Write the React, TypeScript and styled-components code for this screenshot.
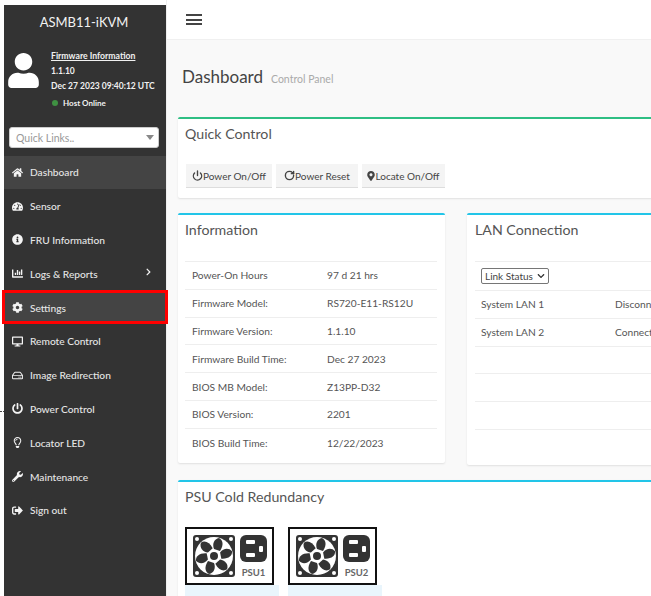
import React from 'react';
import styled, { createGlobalStyle } from 'styled-components';
import {
  FaChartBar,
  FaChevronRight,
  FaCog,
  FaDesktop,
  FaHome,
  FaInfoCircle,
  FaMapMarkerAlt,
  FaPowerOff,
  FaRegHdd,
  FaRegLightbulb,
  FaSignOutAlt,
  FaTachometerAlt,
  FaUser,
  FaWrench,
} from 'react-icons/fa';
import { LuPower, LuRotateCw } from 'react-icons/lu';

const GlobalStyle = createGlobalStyle`
  html, body {
    margin: 0;
    padding: 0;
    background: #fff;
    overflow: hidden;
  }
  body {
    font-family: Lato, "Noto Sans", sans-serif;
  }
`;

const Page = styled.div`
  position: relative;
  width: 651px;
  height: 596px;
  display: flex;
  overflow: hidden;
  padding-left: 4px;
  box-sizing: border-box;
`;

const Dots = styled.div`
  position: absolute;
  left: 0;
  top: 411px;
  width: 4px;
  border-top: 1px dotted #444;
`;

const Sidebar = styled.aside`
  flex: 0 0 162px;
  margin-top: 5px;
  background: #333;
  color: #eee;
  display: flex;
  flex-direction: column;
`;

const Brand = styled.div`
  height: 36px;
  line-height: 34px;
  text-align: center;
  font-size: 13px;
  color: #f2f2f2;
  margin-left: -2px;
`;

const UserPanel = styled.div`
  height: 67px;
  padding-top: 9px;
  display: flex;
  gap: 12px;
  padding-left: 4px;
`;

const Avatar = styled(FaUser)`
  width: 31px;
  height: 35px;
  margin-top: 3px;
  color: #fff;
`;

const UserInfo = styled.div`
  font-size: 8.5px;
  font-weight: 700;
  display: flex;
  flex-direction: column;
  gap: 4px;
  line-height: 11.5px;
  color: #f0f0f0;
`;

const FirmwareLink = styled.span`
  text-decoration: underline;
  font-size: 8.7px;
`;

const HostStatus = styled.span`
  display: flex;
  align-items: center;
  gap: 5px;
  font-size: 8px;
  margin-top: 1px;
  padding-left: 1px;
`;

const StatusDot = styled.i`
  width: 6px;
  height: 6px;
  border-radius: 50%;
  background: #3f9142;
`;

const QuickLinks = styled.div`
  margin: 10px 7px 0 5px;
  height: 21px;
  background: #fff;
  border-radius: 3px;
  border: 1px solid #ccc;
  box-sizing: border-box;
  display: flex;
  align-items: center;
  justify-content: space-between;
  padding: 0 4px 0 6px;
  font-size: 10.5px;
  color: #999;
`;

const Caret = styled.i`
  border-left: 4px solid transparent;
  border-right: 4px solid transparent;
  border-top: 5px solid #888;
`;

const NavList = styled.nav`
  margin-top: 7.5px;
  display: flex;
  flex-direction: column;
`;

const NavItem = styled.div<{ $active?: boolean; $marked?: boolean }>`
  position: relative;
  height: 33.8px;
  display: flex;
  align-items: center;
  padding-left: 8px;
  gap: 7px;
  font-size: 10.2px;
  font-weight: 500;
  color: #e6e6e6;
  background: ${(props) => (props.$active ? '#444' : 'transparent')};

  svg {
    flex: 0 0 11px;
    width: 11px;
    height: 11px;
    color: #f4f4f4;
  }

  ${(props) =>
    props.$marked &&
    `
    &::after {
      content: '';
      position: absolute;
      top: -1px;
      bottom: 0;
      left: -2px;
      right: -2px;
      border: 3px solid #f00;
    }
  `}
`;

const NavArrow = styled(FaChevronRight)`
  position: absolute;
  right: 14px;
  top: 11px;
  && {
    width: 7px;
    height: 8px;
  }
`;

const Main = styled.main`
  flex: 1;
  min-width: 0;
  display: flex;
  flex-direction: column;
  background: #f9f9f9;
  border-left: 1px solid #eee;
  overflow: hidden;
`;

const TopBar = styled.header`
  flex: 0 0 39px;
  background: #fff;
  border-bottom: 1px solid #f0f0f0;
  display: flex;
  align-items: center;
  padding-left: 19px;
`;

const Burger = styled.div`
  width: 16px;
  height: 11px;
  border-top: 2px solid #444;
  border-bottom: 2px solid #444;
  position: relative;
  box-sizing: border-box;

  &::after {
    content: '';
    position: absolute;
    left: 0;
    right: 0;
    top: 2.5px;
    height: 2px;
    background: #444;
  }
`;

const Content = styled.div`
  width: 640px;
  padding: 25px 0 0 11px;
  box-sizing: border-box;
`;

const TitleRow = styled.div`
  display: flex;
  align-items: baseline;
  gap: 8px;
  height: 52px;
  padding-left: 4px;
`;

const PageTitle = styled.h1`
  margin: 0;
  font-size: 17px;
  line-height: 24px;
  font-weight: 400;
  color: #444;
`;

const PageSubtitle = styled.small`
  font-size: 10.5px;
  color: #aaa;
`;

const Card = styled.section<{ $accent: string; $height: number }>`
  background: #fff;
  border-top: 2px solid ${(props) => props.$accent};
  border-radius: 2px;
  box-shadow: 0 1px 2px rgba(0, 0, 0, 0.1);
  height: ${(props) => props.$height}px;
  box-sizing: border-box;
  padding: 0 8px 0 7px;
`;

const CardTitle = styled.h2`
  margin: 0;
  font-size: 14.2px;
  font-weight: 400;
  line-height: 30px;
  color: #555;
`;

const ButtonRow = styled.div`
  margin-top: 15px;
  display: flex;
  gap: 4px;
  padding-left: 1px;
`;

const ActionButton = styled.button<{ $width: number }>`
  width: ${(props) => props.$width}px;
  height: 24px;
  padding: 0;
  display: flex;
  align-items: center;
  justify-content: center;
  border: 0;
  border-bottom: 1px solid #ddd;
  background: #f4f4f4;
  color: #444;
  font: 400 10px Lato, "Noto Sans", sans-serif;

  svg {
    width: 11px;
    height: 11px;
    stroke-width: 3;
  }
`;

const MarkerIcon = styled(FaMapMarkerAlt)`
  && {
    width: 8px;
    height: 10px;
  }
`;

const Columns = styled.div`
  margin-top: 15px;
  display: grid;
  grid-template-columns: 267px 267px;
  gap: 22px;
`;

const Table = styled.div`
  margin-top: 16px;
  border-top: 1px solid #eee;
`;

const Row = styled.div`
  height: 27.8px;
  box-sizing: border-box;
  border-bottom: 1px solid #eee;
  display: grid;
  grid-template-columns: 135px 1fr;
  align-items: center;
  padding-left: 7px;
  font-size: 10.2px;
  color: #555;
  white-space: nowrap;

  &:last-child {
    border-bottom: 0;
  }
`;

const LanRow = styled(Row)`
  grid-template-columns: 134px 1fr;
  padding-left: 6px;

  &:last-child {
    border-bottom: 1px solid #eee;
  }
`;

const LinkSelect = styled.div`
  width: 68px;
  height: 16px;
  box-sizing: border-box;
  border: 1px solid #767676;
  border-radius: 2px;
  display: flex;
  align-items: center;
  justify-content: space-between;
  padding: 0 3px;
  font-size: 10px;
  color: #444;
`;

const SelectChevron = styled(FaChevronRight)`
  width: 8px;
  height: 8px;
  color: #333;
  transform: rotate(90deg);
`;

const SelectRow = styled.div`
  height: 29px;
  box-sizing: border-box;
  border-bottom: 1px solid #eee;
  display: flex;
  align-items: center;
  padding-left: 6px;
`;

const LanCard = styled(Card)`
  padding-left: 8px;
`;

const PsuCard = styled(Card)`
  margin-top: 15px;
`;

const PsuRow = styled.div`
  margin-top: 15px;
  display: flex;
  gap: 9px;
`;

const PsuColumn = styled.div`
  width: 94px;
`;

const PsuStatus = styled.div`
  height: 12px;
  background: #e9f5fc;
`;

const PsuImage = styled.svg`
  display: block;
  width: 89px;
  height: 58px;
`;

const FAN_BLADES = [0, 60, 120, 180, 240, 300];

const PsuIcon = ({ label }: { label: string }) => (
  <PsuImage viewBox="0 0 89 58">
    <rect x="1" y="1" width="87" height="56" fill="#fff" stroke="#111" strokeWidth="2" />
    <rect x="8" y="8" width="42" height="42" rx="3" fill="#333" />
    <circle cx="29" cy="29" r="19" fill="#fff" />
    {[
      [12, 12],
      [46, 12],
      [12, 46],
      [46, 46],
    ].map(([cx, cy]) => (
      <circle key={`${cx}-${cy}`} cx={cx} cy={cy} r="2" fill="#fff" />
    ))}
    {FAN_BLADES.map((angle) => (
      <path
        key={angle}
        d="M29 22 C27 17 29 12 34 11 C38 13 39 18 35 24 Z"
        fill="#333"
        transform={`rotate(${angle} 29 29)`}
      />
    ))}
    <circle cx="29" cy="29" r="6" fill="#fff" />
    <circle cx="29" cy="29" r="4" fill="#333" />
    <rect x="55" y="8" width="27" height="27" rx="6" fill="#333" />
    <rect x="61" y="13" width="9" height="4" rx="1" fill="#fff" />
    <rect x="61" y="26" width="9" height="4" rx="1" fill="#fff" />
    <rect x="74" y="19" width="4" height="6" rx="1" fill="#fff" />
    <text x="68.5" y="49" textAnchor="middle" fontSize="9.5" fontWeight="700" fill="#666" fontFamily="Lato, sans-serif">
      {label}
    </text>
  </PsuImage>
);

const NAV_ITEMS = [
  { label: 'Dashboard', Icon: FaHome, active: true },
  { label: 'Sensor', Icon: FaTachometerAlt },
  { label: 'FRU Information', Icon: FaInfoCircle },
  { label: 'Logs & Reports', Icon: FaChartBar, arrow: true },
  { label: 'Settings', Icon: FaCog, active: true, marked: true },
  { label: 'Remote Control', Icon: FaDesktop },
  { label: 'Image Redirection', Icon: FaRegHdd },
  { label: 'Power Control', Icon: FaPowerOff },
  { label: 'Locator LED', Icon: FaRegLightbulb },
  { label: 'Maintenance', Icon: FaWrench },
  { label: 'Sign out', Icon: FaSignOutAlt },
];

const INFO_ROWS = [
  ['Power-On Hours', '97 d 21 hrs'],
  ['Firmware Model:', 'RS720-E11-RS12U'],
  ['Firmware Version:', '1.1.10'],
  ['Firmware Build Time:', 'Dec 27 2023'],
  ['BIOS MB Model:', 'Z13PP-D32'],
  ['BIOS Version:', '2201'],
  ['BIOS Build Time:', '12/22/2023'],
];

const LAN_ROWS = [
  ['System LAN 1', 'Disconnected'],
  ['System LAN 2', 'Connected'],
  ['', ''],
  ['', ''],
  ['', ''],
];

const App = () => (
  <Page>
    <GlobalStyle />
    <Dots />
    <Sidebar>
      <Brand>ASMB11-iKVM</Brand>
      <UserPanel>
        <Avatar />
        <UserInfo>
          <FirmwareLink>Firmware Information</FirmwareLink>
          <span>1.1.10</span>
          <span>Dec 27 2023 09:40:12 UTC</span>
          <HostStatus>
            <StatusDot />
            Host Online
          </HostStatus>
        </UserInfo>
      </UserPanel>
      <QuickLinks>
        Quick Links..
        <Caret />
      </QuickLinks>
      <NavList>
        {NAV_ITEMS.map(({ label, Icon, active, marked, arrow }) => (
          <NavItem key={label} $active={active} $marked={marked}>
            <Icon />
            {label}
            {arrow && <NavArrow />}
          </NavItem>
        ))}
      </NavList>
    </Sidebar>
    <Main>
      <TopBar>
        <Burger />
      </TopBar>
      <Content>
        <TitleRow>
          <PageTitle>Dashboard</PageTitle>
          <PageSubtitle>Control Panel</PageSubtitle>
        </TitleRow>
        <Card $accent="#2fbf84" $height={81}>
          <CardTitle>Quick Control</CardTitle>
          <ButtonRow>
            <ActionButton $width={86}>
              <LuPower />
              Power On/Off
            </ActionButton>
            <ActionButton $width={82}>
              <LuRotateCw />
              Power Reset
            </ActionButton>
            <ActionButton $width={83}>
              <MarkerIcon />
              Locate On/Off
            </ActionButton>
          </ButtonRow>
        </Card>
        <Columns>
          <Card $accent="#22c5e8" $height={250}>
            <CardTitle>Information</CardTitle>
            <Table>
              {INFO_ROWS.map(([name, value]) => (
                <Row key={name}>
                  <span>{name}</span>
                  <span>{value}</span>
                </Row>
              ))}
            </Table>
          </Card>
          <LanCard $accent="#22c5e8" $height={252}>
            <CardTitle>LAN Connection</CardTitle>
            <Table>
              <SelectRow>
                <LinkSelect>
                  Link Status
                  <SelectChevron />
                </LinkSelect>
              </SelectRow>
              {LAN_ROWS.map(([name, value], index) => (
                <LanRow key={index}>
                  <span>{name}</span>
                  <span>{value}</span>
                </LanRow>
              ))}
            </Table>
          </LanCard>
        </Columns>
        <PsuCard $accent="#22c5e8" $height={140}>
          <CardTitle>PSU Cold Redundancy</CardTitle>
          <PsuRow>
            {['PSU1', 'PSU2'].map((label) => (
              <PsuColumn key={label}>
                <PsuIcon label={label} />
                <PsuStatus />
              </PsuColumn>
            ))}
          </PsuRow>
        </PsuCard>
      </Content>
    </Main>
  </Page>
);

export default App;
